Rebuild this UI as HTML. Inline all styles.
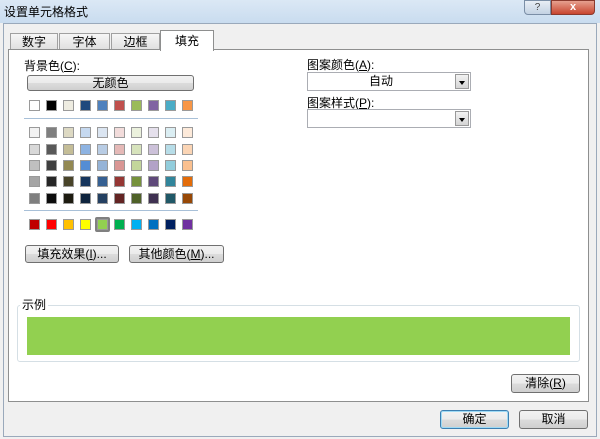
<!DOCTYPE html>
<html><head><meta charset="utf-8"><style>
*{margin:0;padding:0;box-sizing:border-box}
body{width:600px;height:439px;overflow:hidden;background:#f0f0f0;font-family:"Liberation Sans","Noto Sans CJK SC",sans-serif;font-size:12px;color:#000;position:relative}
.a{position:absolute}
.sw{position:absolute;width:11px;height:11px;border:1px solid #9a9a9a}
.btn{position:absolute;border:1px solid #707070;border-radius:3px;background:linear-gradient(#f2f2f2,#ebebeb 50%,#dcdcdc 51%,#cfcfcf);text-align:center;font-size:12px;line-height:16px}
.combo{position:absolute;background:#fff;border:1px solid #abadb3}
.dd{position:absolute;right:1px;top:1px;width:14px;bottom:1px;background:linear-gradient(#f2f2f2,#d5d5d5);border:1px solid #999}
.dd:after{content:"";position:absolute;left:3px;top:6px;border-left:3px solid transparent;border-right:3px solid transparent;border-top:4px solid #000}
.tab{position:absolute;top:33px;height:16px;background:linear-gradient(#f6f6f6,#e0e0e0);border:1px solid #a0a0a0;border-bottom:none;text-align:center;line-height:16px}
</style></head><body>
<div class="a" style="left:0;top:0;width:600px;height:23px;background:linear-gradient(#dbe8f5,#c9dcef)"></div>
<div class="a" style="left:4px;top:3px;font-size:12px">设置单元格格式</div>
<div class="a" style="left:524px;top:0;width:27px;height:15px;border:1px solid #7a8ea6;border-radius:0 0 0 4px;background:linear-gradient(#e8eef5,#c3d2e3);text-align:center;font-size:10px;line-height:13px;color:#444">?</div>
<div class="a" style="left:551px;top:0;width:44px;height:15px;border:1px solid #8a3a2e;border-radius:0 0 4px 0;background:linear-gradient(#e6a08f,#c8452f);text-align:center;color:#fff;font-weight:bold;font-size:11px;line-height:13px">x</div>
<div class="a" style="left:3px;top:23px;width:594px;height:414px;border:1px solid #9aa9bb;background:#f0f0f0"></div>
<div class="tab" style="left:10px;width:48px">数字</div>
<div class="tab" style="left:59px;width:51px">字体</div>
<div class="tab" style="left:111px;width:49px">边框</div>
<div class="a" style="left:8px;top:49px;width:581px;height:353px;background:#fff;border:1px solid #8e8f8f"></div>
<div class="a" style="left:160px;top:30px;width:54px;height:21px;background:#fff;border:1px solid #8e8f8f;border-bottom:none;text-align:center;line-height:20px">填充</div>
<div class="a" style="left:24px;top:57px">背景色(<u>C</u>):</div>
<div class="btn" style="left:27px;top:75px;width:167px;height:16px;line-height:14px">无颜色</div>
<div class="a" style="left:24px;top:118px;width:174px;height:1px;background:#a8c0d8"></div>
<div class="a" style="left:24px;top:210px;width:174px;height:1px;background:#a8c0d8"></div>
<div id="g"></div>
<div class="a" style="left:95px;top:217px;width:15px;height:15px;border:2px solid #808080;border-radius:2px"></div>
<div class="btn" style="left:25px;top:245px;width:94px;height:18px">填充效果(<u>I</u>)...</div>
<div class="btn" style="left:129px;top:245px;width:95px;height:18px">其他颜色(<u>M</u>)...</div>
<div class="a" style="left:307px;top:56px">图案颜色(<u>A</u>):</div>
<div class="combo" style="left:307px;top:72px;width:164px;height:19px"><div style="position:absolute;left:0;right:16px;text-align:center;line-height:17px">自动</div><div class="dd"></div></div>
<div class="a" style="left:307px;top:94px">图案样式(<u>P</u>):</div>
<div class="combo" style="left:307px;top:109px;width:164px;height:19px"><div class="dd"></div></div>
<div class="a" style="left:17px;top:305px;width:563px;height:57px;border:1px solid #d5dfe5;border-radius:3px"></div>
<div class="a" style="left:20px;top:296px;background:#fff;padding:0 2px">示例</div>
<div class="a" style="left:27px;top:317px;width:543px;height:38px;background:#92d050"></div>
<div class="btn" style="left:511px;top:374px;width:69px;height:19px">清除(<u>R</u>)</div>
<div class="btn" style="left:440px;top:410px;width:69px;height:19px;border-color:#3c7fb1;box-shadow:inset 0 0 0 1px #9edaf5">确定</div>
<div class="btn" style="left:519px;top:410px;width:69px;height:19px">取消</div>
<script>
var rows=[
["FFFFFF","000000","EEECE1","1F497D","4F81BD","C0504D","9BBB59","8064A2","4BACC6","F79646"],
["F2F2F2","7F7F7F","DDD9C3","C6D9F0","DBE5F1","F2DCDB","EBF1DD","E5E0EC","DBEEF3","FDEADA"],
["D8D8D8","595959","C4BD97","8DB3E2","B8CCE4","E5B9B7","D7E3BC","CCC1D9","B7DDE8","FBD5B5"],
["BFBFBF","3F3F3F","938953","548DD4","95B3D7","D99694","C3D69B","B2A2C7","92CDDC","FAC08F"],
["A5A5A5","262626","494429","17365D","366092","953734","76923C","5F497A","31859B","E36C09"],
["7F7F7F","0C0C0C","1D1B10","0F243E","244061","632423","4F6128","3F3151","205867","974806"],
["C00000","FF0000","FFC000","FFFF00","92D050","00B050","00B0F0","0070C0","002060","7030A0"]];
var ys=[100,127,144,160,176,193,219],h="";
rows.forEach(function(r,i){r.forEach(function(c,j){h+='<div class="sw" style="left:'+(29+j*17)+'px;top:'+ys[i]+'px;background:#'+c+'"></div>';});});
document.getElementById("g").innerHTML=h;
</script>
</body></html>
